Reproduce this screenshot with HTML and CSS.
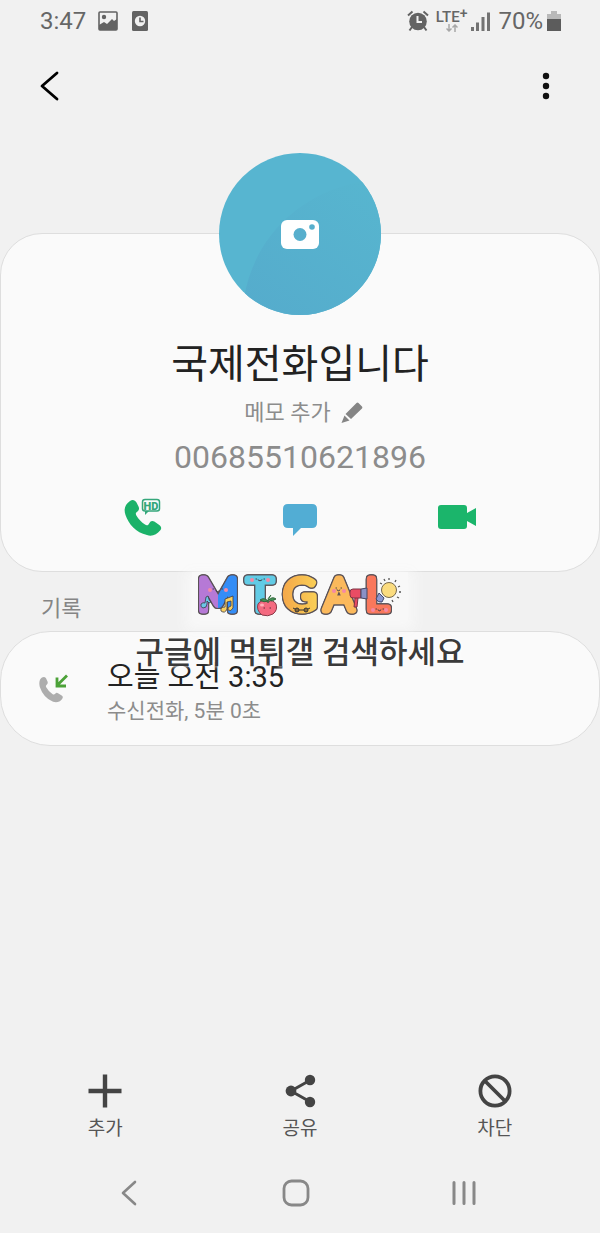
FILE: index.html
```html
<!DOCTYPE html>
<html lang="ko">
<head>
    <meta charset="utf-8">
    <title>국제전화입니다</title>
    <meta name="viewport" content="width=device-width, initial-scale=1">
    <link rel="stylesheet" href="styles.css">
</head>
<body>
<div class="status-bar">
    <span class="status-time">3:47</span>
    <svg class="status-image" width="20" height="20" viewBox="0 0 20 20">
        <rect x="1" y="1" width="18" height="18" rx="1" fill="none" stroke="#636363" stroke-width="1.6"/>
        <circle cx="6" cy="6" r="2.2" fill="#636363"/>
        <path d="M1 14l5-3 3 2 5-5 2 2 3-2v11H1z" fill="#636363"/>
    </svg>
    <svg class="status-clock" width="16" height="20" viewBox="0 0 16 20">
        <rect width="16" height="20" rx="1.5" fill="#636363"/>
        <circle cx="8" cy="10" r="5.2" fill="#f1f1f1"/>
        <path d="M8 6.5V10.5H11.5" fill="none" stroke="#636363" stroke-width="1.6"/>
    </svg>
    <div class="status-right">
        <svg width="22" height="22" viewBox="0 0 22 22">
            <g fill="none" stroke="#636363" stroke-width="2">
                <path d="M1 5.500L5.500 1.500M21 5.500L16.500 1.500M5 17l-2.500 3.500M17 17l2.500 3.500"/>
            </g>
            <circle cx="11" cy="11.500" r="8.800" fill="#636363"/>
            <path d="M10.500 6V12H15" fill="none" stroke="#f1f1f1" stroke-width="2"/>
        </svg>
        <span class="lte">
            <span>LTE<sup>+</sup></span>
            <svg width="12" height="8" viewBox="0 0 12 8" fill="none" stroke="#a8a8a8" stroke-width="1.5"><path d="M3 0V7M.5 4.500L3 7l2.500-2.500M9 8V1M6.500 3.500L9 1l2.500 2.500"/></svg>
        </span>
        <svg width="19" height="20" viewBox="0 0 19 20" fill="#737373"><path d="M0 16h3v4H0zM5 11.500h3V20H5zM10.500 6h3v14h-3zM16 1.500h3V20h-3z"/></svg>
        <span class="status-battery">70%</span>
        <svg width="14" height="20" viewBox="0 0 14 20">
            <path d="M0 3h4V0h6v3h4v6H0z" fill="#b9b9b9"/>
            <path d="M0 8h14v12H0z" fill="#5c5c5c"/>
        </svg>
    </div>
</div>

<header class="app-bar">
    <button type="button" aria-label="뒤로">
        <svg width="24" height="32" viewBox="0 0 24 32" fill="none" stroke="#000" stroke-width="2.8" stroke-linecap="round" stroke-linejoin="round"><path d="M19 3L4 16l15 13"/></svg>
    </button>
    <button type="button" aria-label="더보기">
        <svg width="24" height="32" viewBox="0 0 24 32" fill="#111"><circle cx="12" cy="6" r="3.200"/><circle cx="12" cy="16" r="3.200"/><circle cx="12" cy="26" r="3.200"/></svg>
    </button>
</header>

<main>
    <section class="card contact">
        <button type="button" class="avatar" aria-label="사진 추가">
            <svg width="162" height="162" viewBox="0 0 162 162">
                <defs>
                    <linearGradient id="shade" x1="0" y1="1" x2="0.8" y2="0">
                        <stop offset="0" stop-color="#55abcc"/>
                        <stop offset="1" stop-color="#57b5cf"/>
                    </linearGradient>
                    <clipPath id="round"><circle cx="81" cy="81" r="81"/></clipPath>
                </defs>
                <circle cx="81" cy="81" r="81" fill="#57b5d0"/>
                <path clip-path="url(#round)" d="M25 145C35 85 80 38 150 27L170 60V170H25z" fill="url(#shade)"/>
                <rect x="62" y="67" width="38" height="29" rx="6" fill="#fff"/>
                <circle cx="81" cy="81.500" r="6.500" fill="#57afcd"/>
                <circle cx="93" cy="74" r="2.800" fill="#57afcd"/>
            </svg>
        </button>
        <h1>국제전화입니다</h1>
        <button type="button" class="memo">메모 추가
            <svg width="22" height="22" viewBox="0 0 22 22" fill="#858585"><path d="M4.500 12L15.500 1q1-.8 2 0l3.500 3.500q.8 1 0 2L10 17zM3.500 13.500l5 5L.5 21z"/></svg>
        </button>
        <p class="number">00685510621896</p>
        <div class="contact-actions">
            <button type="button" aria-label="HD 통화">
                <svg width="40" height="40" viewBox="0 0 40 40">
                    <path d="M7 3C9.500 1.200 12 2 13.500 4.500l2 4c1 2 .5 3.800-1 5l-1.200 1c-.8.800-.5 2 .2 3.300 2 3.500 5 6.500 8.500 8.800 1.500 1 2.500.8 3.500-.2l1.800-2.600c1-1 2.500-1.200 4-.3l5 3.500c2 1.400 2.500 3.600 1 5.300-3.500 4.500-8.500 6.500-13.300 4.800C13 34.500 5.500 26 2.500 17 .5 11 2 6.500 7 3z" fill="#1bb269"/>
                    <rect x="19.500" y="1.500" width="17" height="11.500" rx="2.500" fill="#fafafa" stroke="#35a77b" stroke-width="1.500"/>
                    <path d="M22 13v4l4-4z" fill="#35a77b"/>
                    <text class="hd" x="28" y="11.500" text-anchor="middle">HD</text>
                </svg>
            </button>
            <button type="button" aria-label="메시지">
                <svg width="40" height="40" viewBox="0 0 40 40" fill="#52add4"><path d="M8 6h24q5 0 5 5v14q0 5-5 5H21l-8 8v-8H8q-5 0-5-5V11q0-5 5-5z"/></svg>
            </button>
            <button type="button" aria-label="영상통화">
                <svg width="40" height="40" viewBox="0 0 40 40" fill="#1bb56b"><path d="M4 7h23q3 0 3 3v5l9-5v18l-9-5v5q0 3-3 3H4q-3 0-3-3V10q0-3 3-3z"/></svg>
            </button>
        </div>
    </section>

    <section class="history">
        <h2>기록</h2>
        <div class="card call">
            <svg class="call-icon" width="30" height="30" viewBox="0 0 30 30">
                <path d="M3 3.500q2.500-1.500 4 .8l1.500 3.200q.8 2-.8 3.200-1.400 1-.5 2.500 2.500 4.500 6.500 7 1.400.9 2.500-.4 1.200-1.500 2.800-.6l3.700 2.300q2 1.500.4 3.500-3.500 4.500-9 2.800Q4.500 24 .8 13-.8 6 3 3.500z" fill="#adadad"/>
                <path d="M28 1.500L18.500 11M18 3.500V12h9" fill="none" stroke="#4ca238" stroke-width="2.800"/>
            </svg>
            <div class="call-text">
                <p class="call-time">오늘 오전 3:35</p>
                <p class="call-info">수신전화, 5분 0초</p>
            </div>
        </div>

        <div class="watermark">
            <svg class="logo" width="216" height="48" viewBox="0 0 216 48" role="img" aria-label="MTGAL">
                <defs>
                    <linearGradient id="m-fill">
                        <stop offset="0.5" stop-color="#b679d6"/>
                        <stop offset="0.5" stop-color="#348df6"/>
                    </linearGradient>
                    <linearGradient id="g-fill">
                        <stop offset="0" stop-color="#f5a94a"/>
                        <stop offset="1" stop-color="#f9ce55"/>
                    </linearGradient>
                </defs>
                <g class="letters" text-anchor="middle">
                    <text x="26" y="38" fill="url(#m-fill)" stroke="url(#m-fill)">M</text>
                    <text x="68" y="38" fill="#62cbe5" stroke="#62cbe5">T</text>
                    <text x="108" y="38" fill="url(#g-fill)" stroke="url(#g-fill)">G</text>
                    <text x="147" y="38" fill="#fbb95c" stroke="#fbb95c">A</text>
                    <text x="185" y="38" fill="#f9785c" stroke="#f9785c">L</text>
                </g>
                <!-- faces -->
                <g fill="#f588a5">
                    <circle cx="18" cy="18" r="2"/><circle cx="34" cy="18" r="2"/>
                    <circle cx="60" cy="8" r="2"/><circle cx="76" cy="8" r="2"/>
                    <circle cx="142" cy="19" r="2"/><circle cx="152" cy="19" r="2"/>
                    <circle cx="181" cy="38" r="2"/><circle cx="194" cy="38" r="2"/>
                </g>
                <g fill="none" stroke="#3b3b45" stroke-linecap="round">
                    <path d="M21 17h.5M30 17h.5M24 19q2 2 3 0M64 7h.5M72 7h.5M66 8q2 2 4 0M144 16h.5M149 16h.5M145 18q2 2 3 0M184 37h.5M191 37h.5M186 38q2 2 3 0"/>
                </g>
                <!-- music notes -->
                <g stroke="#3b3b45" stroke-width=".8">
                    <path d="M14 25l2-1q1 5 3 6l-2 1-2-2v3q0 4-4 4-3-1-2-4 2-2 4-1z" fill="#6cc5e8"/>
                    <path d="M33 27l8-3v12q-2 4-5 2-1-3 3-4v-5l-4 1v7q-2 5-6 2-1-4 4-4z" fill="#f9cf60"/>
                </g>
                <!-- apple -->
                <path d="M76 30q-7-3-10 2-2 6 4 11 6 2 11-1 5-4 3-10-3-5-8-2z" fill="#f46a80" stroke="#8a3948"/>
                <path d="M76 31q-1-5 3-8M76 29q-4-4-8-1 4 3 8 1M77 28q3-4 7-1-4 3-7 1" fill="#439457" stroke="#35663d"/>
                <ellipse cx="70" cy="33" rx="2" ry="1.500" fill="#ffb2ba"/>
                <path d="M72 36h.5M78 36h.5" stroke="#4d2730" stroke-linecap="round"/>
                <!-- glasses -->
                <g fill="#8a6a3a" stroke="#333"><circle cx="105" cy="38" r="2"/><circle cx="114" cy="38" r="2"/><path d="M107 38h5M101 36l2 1M118 36l-2 1"/></g>
                <!-- mug -->
                <path d="M161 17h8v9h-8q-3 0-3-3v-3q0-3 3-3zM163 26l-1 9h3l1-9" fill="#e94c64" stroke="#7c3444"/>
                <path d="M169 17l6-1v11l-6-1z" fill="#8b91c6" stroke="#464863"/>
                <!-- bulb -->
                <circle cx="197" cy="18" r="7.500" fill="#fbdc7f" stroke="#77694e"/>
                <path d="M187 21l5 5-2 4q-4 1-6-3z" fill="#8a97cf" stroke="#42476b"/>
                <path d="M197 6v2M204 8l-1 2M208 14l-2 1M209 20h-2M207 26l-2-1M201 30l-1-2M188 11l2 1M192 7l1 2" stroke="#555" stroke-width="1.300"/>
            </svg>
            <p>구글에 먹튀갤 검색하세요</p>
        </div>
    </section>
</main>

<footer>
    <div class="bottom-actions">
        <button type="button">
            <svg width="34" height="34" viewBox="0 0 34 34" stroke="#444" stroke-width="4.400"><path d="M17 .5v33M.5 17h33"/></svg>
            추가
        </button>
        <button type="button">
            <svg width="34" height="34" viewBox="0 0 34 34" fill="#444"><path d="M27.500 6L8 17l19.500 11" fill="none" stroke="#444" stroke-width="3"/><circle cx="27" cy="6" r="5.200"/><circle cx="8" cy="17" r="5.400"/><circle cx="27" cy="28" r="5.200"/></svg>
            공유
        </button>
        <button type="button">
            <svg width="34" height="34" viewBox="0 0 34 34" fill="none" stroke="#444" stroke-width="3.800"><circle cx="17" cy="17" r="14.600"/><path d="M7 7l20 20"/></svg>
            차단
        </button>
    </div>
    <nav class="nav-bar">
        <button type="button" aria-label="이전">
            <svg width="28" height="28" viewBox="0 0 28 28" fill="none" stroke="#888" stroke-width="2.600" stroke-linecap="round" stroke-linejoin="round"><path d="M20 3L8 14l12 11"/></svg>
        </button>
        <button type="button" aria-label="홈">
            <svg width="28" height="28" viewBox="0 0 28 28" fill="none" stroke="#888" stroke-width="2.800"><rect x="2" y="2" width="24" height="24" rx="7.500"/></svg>
        </button>
        <button type="button" aria-label="최근 앱">
            <svg width="28" height="28" viewBox="0 0 28 28" stroke="#888" stroke-width="3" stroke-linecap="round"><path d="M4 3.500v21M14 3.500v21M24 3.500v21"/></svg>
        </button>
    </nav>
</footer>
</body>
</html>
```
FILE: styles.css
```css
* {
    box-sizing: border-box;
}

body {
    display: flex;
    flex-direction: column;
    min-height: 100vh;
    margin: 0;
    background-color: #f1f1f1;
    color: #222;
    font-family: Roboto, "Noto Sans CJK KR", sans-serif;
}

h1, h2, p {
    margin: 0;
    font-weight: 400;
}

svg {
    display: block;
    flex-shrink: 0;
}

button {
    padding: 0;
    border: 0;
    background: none;
    color: inherit;
    font: inherit;
}

.status-bar {
    display: flex;
    align-items: center;
    height: 42px;
    padding: 0 39px 0 40px;
    color: #666;
    font-size: 24px;
    line-height: 28px;
}

.status-image {
    margin-left: 12px;
}

.status-clock {
    margin-left: 14px;
}

.status-right {
    display: flex;
    align-items: center;
    gap: 4px;
    margin-left: auto;
}

.status-battery {
    margin-left: 4px;
}

.lte {
    display: flex;
    flex-direction: column;
    align-items: center;
    margin-left: 3px;
    font-size: 15px;
    font-weight: 500;
    line-height: 14px;
}

.lte sup {
    font-size: 14px;
    line-height: 0;
    vertical-align: 4px;
}

.app-bar {
    display: flex;
    align-items: center;
    justify-content: space-between;
    height: 88px;
    padding: 0 42px 0 38px;
}

.card {
    border: 1px solid #dedede;
    background-color: #fafafa;
}

.contact {
    display: flex;
    flex-direction: column;
    align-items: center;
    margin-top: 103px;
    padding-bottom: 33px;
    border-radius: 42px;
}

.avatar {
    margin-top: -81px;
    border-radius: 50%;
}

.contact h1 {
    margin-top: 24px;
    font-size: 40px;
    line-height: 52px;
}

.memo {
    display: flex;
    align-items: center;
    gap: 10px;
    margin-top: 8px;
    padding-left: 7px;
    color: #8c8c8c;
    font-size: 22px;
    line-height: 28px;
}

.number {
    margin-top: 10px;
    color: #8c8c8c;
    font-size: 32px;
    line-height: 40px;
}

.contact-actions {
    display: grid;
    grid-template-columns: repeat(3, 1fr);
    justify-items: center;
    width: 79%;
    margin-top: 21px;
}

.hd {
    fill: #35a77b;
    font-size: 11px;
    font-weight: 900;
}

.history {
    position: relative;
}

.history h2 {
    padding: 21px 41px 6px;
    color: #858585;
    font-size: 22px;
    line-height: 32px;
}

.call {
    display: flex;
    align-items: center;
    gap: 38px;
    min-height: 115px;
    padding: 0 38px;
    border-radius: 50px;
}

.call-text {
    padding-top: 8px;
}

.call-time {
    font-size: 29px;
    line-height: 36px;
}

.call-info {
    color: #8c8c8c;
    font-size: 21px;
    line-height: 32px;
}

.watermark {
    position: absolute;
    top: 0;
    left: 0;
    right: 0;
    display: flex;
    flex-direction: column;
    align-items: center;
    pointer-events: none;
}

.watermark p {
    margin-top: 13px;
    color: #3a3a3a;
    font-size: 31px;
    font-weight: 500;
    line-height: 40px;
    text-shadow: 0 0 3px #fff, 0 0 6px #fff;
}

.logo {
    overflow: visible;
    background-color: #f8f8f8;
    box-shadow: 0 4px 12px 6px #f8f8f8;
}

.letters {
    font-family: Lato, sans-serif;
    font-size: 44px;
    font-weight: 300;
    stroke-width: 7px;
    stroke-linejoin: round;
    filter: drop-shadow(1px 0 #5a5257) drop-shadow(-1px 0 #5a5257) drop-shadow(0 1px #5a5257) drop-shadow(0 -1px #5a5257);
}

footer {
    margin-top: auto;
    color: #555;
}

.bottom-actions {
    display: grid;
    grid-template-columns: repeat(3, 1fr);
    padding: 0 8px;
}

.bottom-actions button {
    display: flex;
    flex-direction: column;
    align-items: center;
    gap: 8px;
    font-size: 19px;
    line-height: 26px;
}

.nav-bar {
    display: grid;
    grid-template-columns: repeat(3, 1fr);
    justify-items: center;
    padding: 37px 52px 26px 45px;
}
```
